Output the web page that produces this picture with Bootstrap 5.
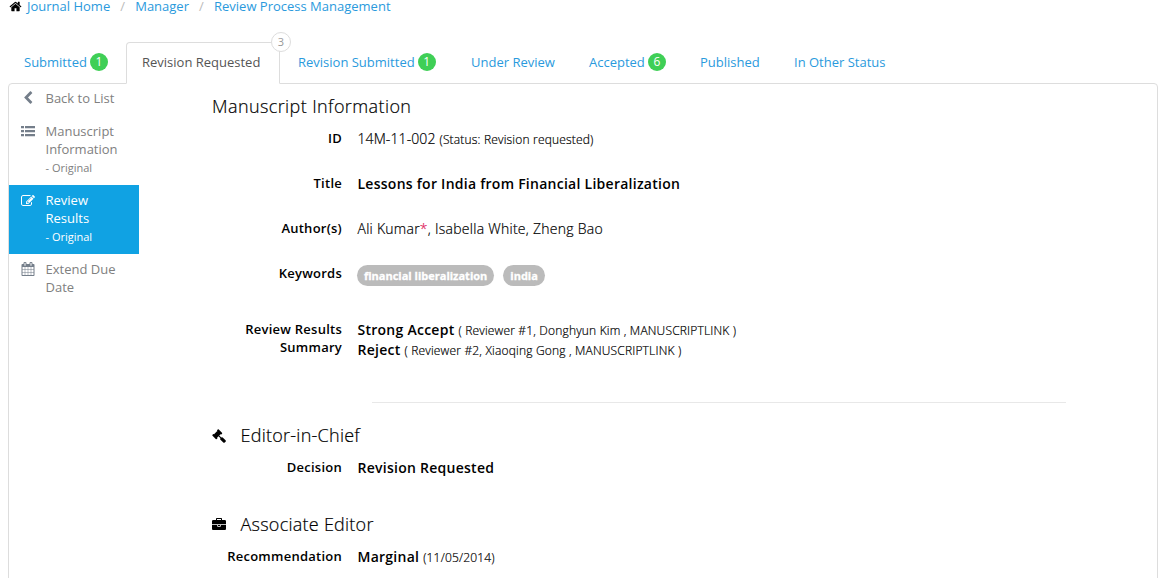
<!DOCTYPE html>
<html lang="en">
<head>
<meta charset="utf-8">
<title>Review Process Management</title>
<link href="https://cdn.jsdelivr.net/npm/bootstrap@5.3.0/dist/css/bootstrap.min.css" rel="stylesheet">
<style>
body{font-family:"Open Sans",sans-serif;font-size:13px;line-height:18px;color:#000;background:#fff;height:578px;overflow:hidden}
a{color:#2a9add;text-decoration:none}
svg{fill:currentColor;display:block;flex:none}
.crumbs{height:42px;padding-left:9px;line-height:12px}
.crumbs svg{margin-right:5px}
.crumbs .sep{color:#bbb;width:25px;text-align:center}
.tabs{--bs-nav-tabs-border-width:0;height:42px;padding-left:8px;position:relative;z-index:1}
.tabs .nav-link{padding:10px 16px 0;height:42px;color:#2a9add;border:1px solid transparent;border-radius:4px 4px 0 0;white-space:nowrap;line-height:18px;margin:0}
.tabs .nav-link.has-count{padding-left:15px}
.tabs .nav-link.active{color:#555;background:#fff;border-color:#ddd #ddd #fff;position:relative;width:154px;padding-left:15px}
.tabs .slot-a{width:118px}.tabs .slot-b{width:156px}.tabs .slot-c{width:172px}.tabs .slot-d{width:111px}.tabs .slot-e{width:94px}
.count{--bs-badge-font-size:12px;--bs-badge-font-weight:400;background:#3fcf56;width:18px;height:18px;padding:0;line-height:18px;margin:-1px 0 0 3px;vertical-align:1px}
.nav-link .badge.count{top:0}
.corner{position:absolute;right:-12px;top:-11px;width:20px;height:20px;border:1px solid #ddd;border-radius:50%;background:#fff;color:#999;font-size:11px;line-height:18px;text-align:center}
.panel{margin:-1px 8px 0;border:1px solid #ddd;border-radius:4px;height:520px}
.side{width:130px;flex:none;margin-top:-1px}
.side a{color:#808080;padding:6px 12px 9px;display:flex}
.side a svg{color:#747e8a;margin-top:2px}
.side a span{margin-left:10.500px}
.side small{display:block;font-size:11px;line-height:18px;padding-top:1px;margin-bottom:-1px}
.side a.on,.side a.on svg{color:#fff}
.side a.on svg{margin-top:2.500px}
.side a.on{background:#10a2e3}
.main-info{margin-left:73px;width:900px}
.main-info h4{font-size:18px;line-height:20px;font-weight:300;margin:0 0 0 14.500px;letter-spacing:.25px;-webkit-text-stroke:.2px}
.main-info h4.top{margin:12px 0 13px;letter-spacing:.4px}
.line{display:flex;height:45px}
.line.keys{height:56px}.line.results{height:82px}
.lab{width:130px;text-align:right;font-weight:600;margin-right:15px;flex:none;letter-spacing:.25px}
.val{font-size:14px;line-height:20px;font-weight:300;padding-left:.5px;letter-spacing:.26px;-webkit-text-stroke:.2px}
.val b{font-weight:600;-webkit-text-stroke:0}
.val small{font-size:12px;letter-spacing:.18px;line-height:1}
.val .code{letter-spacing:.1px}
.star{color:#e0245e}
.tagpill{--bs-badge-font-size:11px;--bs-badge-font-weight:700;background:#bbb;border-radius:11px;height:21px;line-height:21px;padding:0 7px;margin:1px 9px 0 0;-webkit-text-stroke:.3px}
.rule{width:694px;margin-left:160px;height:1px;background:#e8e8e8}
.role{margin:22px 0 13px}
.role svg{position:relative;left:-.5px;top:.5px}
.role.next{margin-top:11px}
</style>
</head>
<body>
<nav class="crumbs d-flex">
<svg width="13" height="13" viewBox="0 0 1792 1792"><path d="M1472 992v480q0 26-19 45t-45 19h-384v-384h-256v384h-384q-26 0-45-19t-19-45v-480q0-1 .5-3t.5-3l575-474 575 474q1 2 1 6zm223-69l-62 74q-8 9-21 11h-3q-13 0-21-7l-692-577-692 577q-12 8-24 7-13-2-21-11l-62-74q-8-10-7-23.5t11-21.5l719-599q32-26 76-26t76 26l244 204v-195q0-14 9-23t23-9h192q14 0 23 9t9 23v408l219 182q10 8 11 21.5t-7 23.5z"/></svg>
<a href="#">Journal Home</a><span class="sep">/</span><a href="#">Manager</a><span class="sep">/</span><a href="#">Review Process Management</a>
</nav>
<ul class="nav nav-tabs tabs flex-nowrap">
<li class="nav-item slot-a"><a class="nav-link has-count" href="#">Submitted<span class="badge rounded-circle count">1</span></a></li>
<li class="nav-item slot-b"><a class="nav-link active" href="#">Revision Requested<span class="corner">3</span></a></li>
<li class="nav-item slot-c"><a class="nav-link has-count" href="#">Revision Submitted<span class="badge rounded-circle count">1</span></a></li>
<li class="nav-item slot-a"><a class="nav-link" href="#">Under Review</a></li>
<li class="nav-item slot-d"><a class="nav-link" href="#">Accepted<span class="badge rounded-circle count">6</span></a></li>
<li class="nav-item slot-e"><a class="nav-link" href="#">Published</a></li>
<li class="nav-item"><a class="nav-link" href="#">In Other Status</a></li>
</ul>
<div class="panel d-flex align-items-start">
<nav class="side">
<a href="#"><svg width="14" height="14" viewBox="0 0 1792 1792"><path d="M1427 301l-531 531 531 531q19 19 19 45t-19 45l-166 166q-19 19-45 19t-45-19l-742-742q-19-19-19-45t19-45l742-742q19-19 45-19t45 19l166 166q19 19 19 45t-19 45z"/></svg><span>Back to List</span></a>
<a href="#"><svg width="14" height="14" viewBox="0 0 14 14"><path d="M0 2h3v2.200H0zM4 2h10v2.200H4zM0 6h3v2.200H0zM4 6h10v2.200H4zM0 10h3v2.200H0zM4 10h10v2.200H4z"/></svg><span>Manuscript<br>Information<small>- Original</small></span></a>
<a href="#" class="on"><svg width="14" height="14" viewBox="0 0 1792 1792"><path d="M888 1184l116-116-152-152-116 116v56h96v96h56zm440-720q-16-16-33 1l-350 350q-17 17-1 33t33-1l350-350q17-17 1-33zm80 594v190q0 119-84.5 203.5t-203.5 84.5h-832q-119 0-203.5-84.5t-84.5-203.5v-832q0-119 84.5-203.5t203.5-84.5h832q63 0 117 25 15 7 18 23 3 17-9 29l-49 49q-14 14-32 8-23-6-45-6h-832q-66 0-113 47t-47 113v832q0 66 47 113t113 47h832q66 0 113-47t47-113v-126q0-13 9-22l64-64q15-15 35-7t20 29zm-96-738l288 288-672 672h-288v-288zm444 132l-92 92-288-288 92-92q28-28 68-28t68 28l152 152q28 28 28 68t-28 68z"/></svg><span>Review<br>Results<small>- Original</small></span></a>
<a href="#"><svg width="14" height="14" viewBox="0 0 1792 1792"><path d="M192 1664h288v-288h-288v288zm352 0h320v-288h-320v288zm-352-352h288v-320h-288v320zm352 0h320v-320h-320v320zm-352-384h288v-288h-288v288zm736 736h320v-288h-320v288zm-384-736h320v-288h-320v288zm768 736h288v-288h-288v288zm-384-352h320v-320h-320v320zm-352-864v-288q0-13-9.5-22.5t-22.5-9.5h-64q-13 0-22.5 9.5t-9.5 22.5v288q0 13 9.5 22.5t22.5 9.5h64q13 0 22.5-9.5t9.5-22.5zm736 864h288v-320h-288v320zm-384-384h320v-288h-320v288zm384 0h288v-288h-288v288zm32-480v-288q0-13-9.5-22.5t-22.5-9.5h-64q-13 0-22.5 9.5t-9.5 22.5v288q0 13 9.5 22.5t22.5 9.5h64q13 0 22.5-9.5t9.5-22.5zm384-64v1280q0 52-38 90t-90 38h-1408q-52 0-90-38t-38-90v-1280q0-52 38-90t90-38h128v-96q0-66 47-113t113-47h64q66 0 113 47t47 113v96h384v-96q0-66 47-113t113-47h64q66 0 113 47t47 113v96h128q52 0 90 38t38 90z"/></svg><span>Extend Due<br>Date</span></a>
</nav>
<main class="main-info">
<h4 class="top">Manuscript Information</h4>
<div class="line"><div class="lab">ID</div><div class="val"><span class="code">14M-11-002</span> <small>(Status: Revision requested)</small></div></div>
<div class="line"><div class="lab">Title</div><div class="val"><b>Lessons for India from Financial Liberalization</b></div></div>
<div class="line"><div class="lab">Author(s)</div><div class="val">Ali Kumar<span class="star">*</span>, Isabella White, Zheng Bao</div></div>
<div class="line keys"><div class="lab">Keywords</div><div class="d-flex"><span class="badge tagpill">financial liberalization</span><span class="badge tagpill">india</span></div></div>
<div class="line results"><div class="lab">Review Results Summary</div><div class="val"><b>Strong Accept</b> <small>( Reviewer #1, Donghyun Kim , MANUSCRIPTLINK )</small><br><b>Reject</b> <small>( Reviewer #2, Xiaoqing Gong , MANUSCRIPTLINK )</small></div></div>
<div class="rule"></div>
<div class="d-flex align-items-center role"><svg width="14" height="14" viewBox="0 0 1792 1792"><path d="M1771 1536q0 53-37 90l-107 108q-39 37-91 37-53 0-90-37l-363-364q-38-36-38-90 0-53 43-96l-256-256-126 126q-14 14-34 14t-34-14q2 2 12.500 12t12.500 13 10 11.500 10 13.500 6 13.500 5.500 16.500 1.500 18q0 38-28 68-3 3-16.500 18t-19 20.500-18.500 16.500-22 15.500-22 9-26 4.500q-40 0-68-28l-408-408q-28-28-28-68 0-13 4.500-26t9-22 15.500-22 16.500-18.500 20.500-19 18-16.500q30-28 68-28 10 0 18 1.500t16.500 5.500 13.500 6 13.500 10 11.500 10 13 12.500 12 12.500q-14-14-14-34t14-34l348-348q14-14 34-14t34 14q-2-2-12.500-12t-12.500-13-10-11.500-10-13.500-6-13.500-5.500-16.500-1.500-18q0-38 28-68 3-3 16.500-18t19-20.500 18.500-16.500 22-15.500 22-9 26-4.500q40 0 68 28l408 408q28 28 28 68 0 13-4.500 26t-9 22-15.500 22-16.500 18.500-20.500 19-18 16.500q-30 28-68 28-10 0-18-1.500t-16.500-5.500-13.500-6-13.500-10-11.500-10-13-12.500-12-12.500q14 14 14 34t-14 34l-126 126 256 256q43-43 96-43 52 0 91 37l363 363q37 39 37 91z"/></svg><h4>Editor-in-Chief</h4></div>
<div class="line"><div class="lab">Decision</div><div class="val"><b>Revision Requested</b></div></div>
<div class="d-flex align-items-center role next"><svg width="14" height="14" viewBox="0 0 1792 1792"><path d="M640 256h512v-128h-512v128zm1152 640v480q0 66-47 113t-113 47h-1472q-66 0-113-47t-47-113v-480h672v160q0 26 19 45t45 19h320q26 0 45-19t19-45v-160h672zm-768 0v128h-256v-128h256zm768-480v384h-1792v-384q0-66 47-113t113-47h352v-160q0-40 28-68t68-28h576q40 0 68 28t28 68v160h352q66 0 113 47t47 113z"/></svg><h4>Associate Editor</h4></div>
<div class="line"><div class="lab">Recommendation</div><div class="val"><b>Marginal</b> <small>(11/05/2014)</small></div></div>
</main>
</div>
<script src="https://cdn.jsdelivr.net/npm/bootstrap@5.3.0/dist/js/bootstrap.bundle.min.js"></script>
</body>
</html>
